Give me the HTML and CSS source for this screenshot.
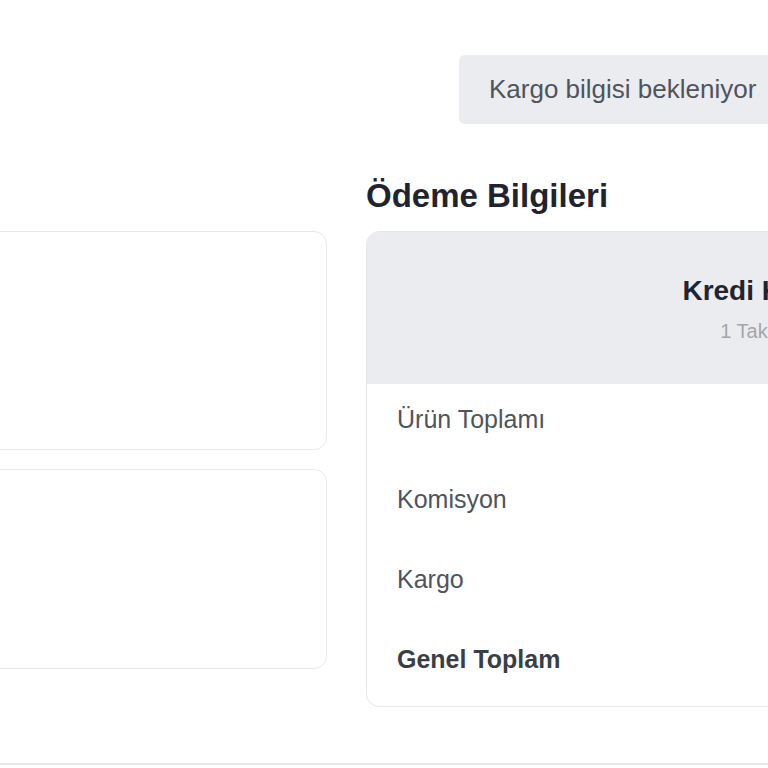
FILE: index.html
```html
<!DOCTYPE html>
<html lang="tr">
<head>
<meta charset="utf-8">
<title>Sipariş Detayı</title>
<link rel="stylesheet" href="styles.css">
</head>
<body>
<div class="page">
  <div class="top-row">
    <div class="status-badge">Kargo bilgisi bekleniyor</div>
  </div>
  <div class="columns">
    <section class="col">
      <div class="title-spacer"></div>
      <div class="info-card card-a"></div>
      <div class="info-card card-b"></div>
    </section>
    <section class="col">
      <h2 class="section-title">Ödeme Bilgileri</h2>
      <div class="pay-card">
        <div class="pay-head">
          <div class="pay-method">Kredi Kartı</div>
          <div class="pay-sub">1 Taksit</div>
        </div>
        <div class="pay-row"><span class="label">Ürün Toplamı</span></div>
        <div class="pay-row"><span class="label">Komisyon</span></div>
        <div class="pay-row"><span class="label">Kargo</span></div>
        <div class="pay-row total"><span class="label">Genel Toplam</span></div>
      </div>
    </section>
  </div>
  <div class="footer-line"></div>
</div>
</body>
</html>
```
FILE: styles.css
```css
html, body {
  margin: 0;
  padding: 0;
  background: #ffffff;
  overflow: hidden;
}
body {
  font-family: "Liberation Sans", Arial, sans-serif;
  color: #4b5058;
}
.page {
  width: 1591px;
  margin-left: -449px;
  padding-top: 55px;
}
.top-row {
  display: flex;
}
.status-badge {
  margin-left: 908px;
  background: #ebecef;
  border-radius: 6px;
  padding: 18px 30px;
  font-size: 26px;
  line-height: 33px;
  color: #4f545c;
  white-space: nowrap;
}
.columns {
  display: grid;
  grid-template-columns: 776px 776px;
  column-gap: 39px;
  margin-top: 53px;
}
.col {
  display: flex;
  flex-direction: column;
}
.title-spacer {
  height: 38px;
  margin-bottom: 16px;
}
.section-title {
  margin: 0 0 16px 0;
  font-size: 33px;
  line-height: 38px;
  font-weight: 700;
  color: #1f2430;
}
.info-card {
  border: 1px solid #e9e9e9;
  border-radius: 13px;
  background: #fff;
}
.card-a {
  height: 217px;
}
.card-b {
  height: 198px;
  margin-top: 19px;
}
.pay-card {
  border: 1px solid #e6e7e9;
  border-radius: 13px;
  overflow: hidden;
  background: #fff;
  padding-bottom: 2px;
}
.pay-head {
  background: #ebecef;
  height: 152px;
  box-sizing: border-box;
  padding-top: 43px;
  text-align: center;
}
.pay-method {
  font-size: 28px;
  line-height: 32px;
  font-weight: 700;
  color: #1f2430;
}
.pay-sub {
  margin-top: 12px;
  font-size: 20px;
  line-height: 24px;
  color: #a3a6ab;
}
.pay-row {
  height: 80px;
  box-sizing: border-box;
  display: flex;
  align-items: center;
  padding: 0 30px 9px 30px;
  font-size: 25px;
  color: #4f545c;
}
.pay-row.total {
  font-weight: 700;
  color: #3a3f47;
}
.footer-line {
  margin-top: 56px;
  height: 2px;
  background: #e6e6e6;
}
```
